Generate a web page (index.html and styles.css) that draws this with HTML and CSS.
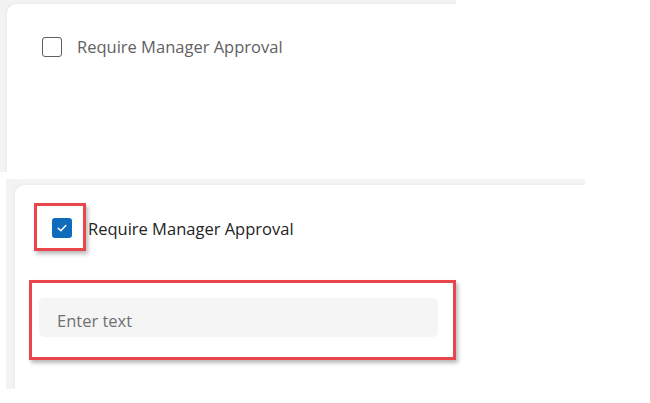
FILE: index.html
```html
<!DOCTYPE html>
<html lang="en">
<head>
<meta charset="utf-8">
<title>Require Manager Approval</title>
<link rel="stylesheet" href="styles.css">
</head>
<body>
  <div class="page">
    <section class="shot shot-top">
      <div class="card card-top">
        <label class="check-row">
          <span class="box box-empty"></span>
          <span class="label label-muted">Require Manager Approval</span>
        </label>
      </div>
    </section>

    <section class="shot shot-bottom">
      <div class="card card-bottom">
        <div class="check-row check-row-bottom">
          <span class="highlight highlight-check">
            <span class="box box-checked">
              <svg viewBox="0 0 20 20" width="20" height="20" aria-hidden="true">
                <path d="M6.2 10.3l2.6 2.5 5-5.2" fill="none" stroke="#ffffff" stroke-width="1.5" stroke-linecap="round" stroke-linejoin="round"/>
              </svg>
            </span>
          </span>
          <span class="label label-dark">Require Manager Approval</span>
        </div>
        <div class="highlight highlight-input">
          <div class="field">Enter text</div>
        </div>
      </div>
    </section>
  </div>
</body>
</html>
```
FILE: styles.css
```css
html, body {
  margin: 0;
  padding: 0;
  background: #ffffff;
}

body {
  font-family: "Open Sans", "Noto Sans", "Liberation Sans", sans-serif;
  width: 650px;
  height: 403px;
  overflow: hidden;
}

.page {
  display: flex;
  flex-direction: column;
  align-items: flex-start;
}

.shot {
  background: #f3f3f3;
  display: flex;
  box-sizing: border-box;
}

.shot-top {
  width: 456px;
  height: 172px;
  padding: 4px 0 0 7px;
}

.shot-bottom {
  margin: 7px 0 0 6px;
  width: 579px;
  height: 210px;
  padding: 6px 0 0 9px;
}

.card {
  flex: 1;
  background: #ffffff;
  border-top-left-radius: 9px;
  box-shadow: -1px -1px 2px rgba(0, 0, 0, 0.04);
  display: flex;
  flex-direction: column;
  align-items: flex-start;
}

.card-top {
  padding: 32px 0 0 35px;
}

.card-bottom {
  padding: 18px 0 0 14px;
}

.check-row {
  display: flex;
  align-items: center;
}

.box {
  width: 20px;
  height: 20px;
  box-sizing: border-box;
  border-radius: 3px;
  display: flex;
  align-items: center;
  justify-content: center;
  flex: none;
}

.box-empty {
  border: 1px solid #616161;
  background: #ffffff;
}

.box-checked {
  background: #0f6cbd;
}

.label {
  font-size: 16.5px;
  line-height: 22px;
  white-space: nowrap;
}

.label-muted {
  color: #616161;
  margin-left: 15px;
}

.label-dark {
  color: #242424;
  margin-left: 2px;
  padding-top: 4px;
}

.check-row-bottom {
  margin-left: 5px;
}

.highlight {
  border: 3px solid #e8464c;
  box-shadow: 2px 3px 4px rgba(0, 0, 0, 0.28);
  box-sizing: border-box;
  display: flex;
}

.highlight-check {
  width: 52px;
  height: 48px;
  padding: 12px 0 0 15px;
}

.highlight-input {
  margin-top: 29px;
  width: 427px;
  height: 80px;
  padding: 15px 15px 0 7px;
}

.field {
  flex: 1;
  height: 39px;
  box-sizing: border-box;
  background: #f5f5f5;
  border-radius: 5px;
  color: #707070;
  font-size: 16.5px;
  line-height: 39px;
  padding: 3px 0 0 18px;
}
```
